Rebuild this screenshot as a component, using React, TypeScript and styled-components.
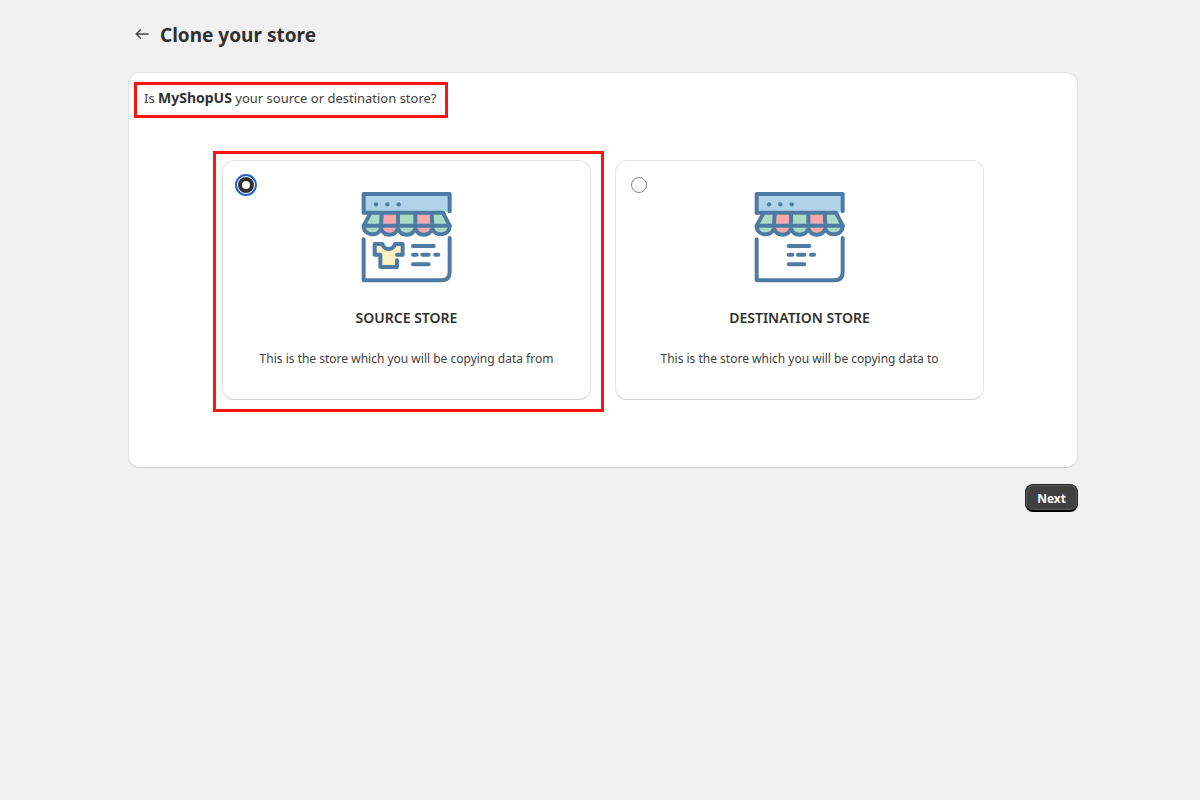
import React, { useState } from "react";
import styled, { createGlobalStyle } from "styled-components";

const GlobalStyle = createGlobalStyle`
  *, *::before, *::after { box-sizing: border-box; }
  body {
    margin: 0;
    background: #f1f1f1;
    color: #303030;
    font-family: "Segoe UI", "Noto Sans", "Open Sans", sans-serif;
    font-size: 13px;
    line-height: 20px;
  }
`;

const HIGHLIGHT = "#fb1410";

const Page = styled.div`
  padding: 21px 16px 20px 22px;
`;

const Content = styled.main`
  max-width: 950px;
  margin: 0 auto;
`;

const Header = styled.header`
  display: flex;
  align-items: flex-start;
  gap: 8px;
  padding-left: 4px;
  margin-bottom: 23px;
`;

const BackLink = styled.a`
  display: flex;
  width: 20px;
  height: 26px;
  align-items: center;
  color: #4a4a4a;
`;

const Title = styled.h1`
  margin: 0;
  font-size: 19px;
  line-height: 28px;
  font-weight: 700;
`;

const Panel = styled.section`
  padding: 9px 5px 67px;
  background: #fff;
  border: 1px solid #e3e3e3;
  border-bottom-color: #cfcfcf;
  border-radius: 12px;
`;

const Question = styled.p`
  width: fit-content;
  margin: 0;
  padding: 3px 8px 7px 7px;
  border: 3px solid ${HIGHLIGHT};
  color: #404040;

  b {
    color: #303030;
    font-size: 14px;
  }
`;

const Options = styled.div`
  display: grid;
  grid-template-columns: 1fr 1fr;
  gap: 24px;
  padding: 42px 88px 0;
`;

const OptionCard = styled.label<{ $highlighted?: boolean }>`
  position: relative;
  display: grid;
  grid-template-columns: 16px 1fr;
  padding: 16px 15px 30px;
  background: #fff;
  border: 1px solid #e3e3e3;
  border-bottom-color: #cfcfcf;
  border-radius: 12px;
  cursor: pointer;

  &::after {
    content: "";
    display: ${(p) => (p.$highlighted ? "block" : "none")};
    position: absolute;
    inset: -10px -14px -13px -10px;
    border: 3px solid ${HIGHLIGHT};
    pointer-events: none;
  }
`;

const Radio = styled.input`
  grid-area: 1 / 1;
  appearance: none;
  width: 16px;
  height: 16px;
  margin: 0;
  background: #fdfdfd;
  border: 1px solid #8a8a8a;
  border-radius: 50%;

  &:checked {
    background: #fff;
    border: 4px solid #303030;
    outline: 2px solid #1f5fd0;
    outline-offset: 1px;
  }
`;

const OptionBody = styled.div`
  grid-area: 1 / 1 / 2 / -1;
  display: flex;
  flex-direction: column;
  align-items: center;
  padding-top: 3px;
  text-align: center;
  pointer-events: none;
`;

const OptionTitle = styled.strong`
  margin-top: 16px;
  font-size: 14px;
  font-weight: 600;
`;

const OptionText = styled.span`
  margin-top: 21px;
  color: #404040;
  font-size: 12px;
`;

const Footer = styled.footer`
  display: flex;
  justify-content: flex-end;
  margin-top: 16px;
`;

const NextButton = styled.button`
  height: 28px;
  padding: 3px 11px 0;
  color: #fff;
  background: #404040;
  border: 1px solid #1f1f1f;
  border-bottom: 2px solid #000;
  border-radius: 8px;
  box-shadow: inset 0 0 0 1px #5c5c5c;
  font: inherit;
  font-size: 12px;
  font-weight: 700;
  cursor: pointer;
`;

const GREEN = "#aadcc5";
const PINK = "#f4a9ac";

function StoreIcon({ stocked }: { stocked: boolean }) {
  return (
    <svg width="112" height="112" viewBox="3 0 336 336" fill="none" stroke="#4e7ba3"
      strokeWidth="12" strokeLinecap="round" strokeLinejoin="round" aria-hidden="true">
      <path d="M41 98V42H299V96L284 98Z" fill="#afd4ea" stroke="none" />
      <g stroke="none">
        <path d="M61 98H97L93 137V138A26 25 0 0 1 41 138Z" fill={GREEN} />
        <path d="M97 98H144V138A25.500 25 0 0 1 93 138Z" fill={PINK} />
        <path d="M144 98H196V138A26 25 0 0 1 144 138Z" fill={GREEN} />
        <path d="M196 98H243L247 138A25.500 25 0 0 1 196 138Z" fill={PINK} />
        <path d="M243 98H279L299 138A26 25 0 0 1 247 138Z" fill={GREEN} />
      </g>
      <path d="M41 98V42H299V94" />
      <path d="M41 98H279L299 137H41L61 100M95 98L93 137M144 98V137M196 98V137M245 98L247 137" />
      <path d="M41 137C41 170 85 170 93 146C101 170 136 170 144 146C152 170 188 170 196 146C204 170 239 170 247 146C255 170 299 170 299 137" />
      <path d="M41 178V301H274Q299 301 299 276V174" />
      <g fill="#4e7ba3" stroke="none">
        <circle cx="78" cy="73" r="6.500" />
        <circle cx="112" cy="73" r="6.500" />
        <circle cx="146" cy="73" r="6.500" />
      </g>
      {stocked && (
        <path fill="#fff0bd" d="M141 241V261H91V224H74V192H97Q101 207 116 207Q131 207 135 192H158V224H141" />
      )}
      <path transform={stocked ? undefined : "translate(-52 0)"}
        d="M189 198H251M189 224H200M217 224H236M256 224H265M189 253H236" />
    </svg>
  );
}

const OPTIONS = [
  { id: "source", title: "SOURCE STORE", text: "This is the store which you will be copying data from" },
  { id: "destination", title: "DESTINATION STORE", text: "This is the store which you will be copying data to" },
];

export default function App() {
  const [selected, setSelected] = useState("source");

  return (
    <Page>
      <GlobalStyle />
      <Content>
        <Header>
          <BackLink href="#" aria-label="Back">
            <svg width="20" height="20" viewBox="0 0 20 20" fill="none" stroke="currentColor"
              strokeWidth="1.500" strokeLinecap="round" strokeLinejoin="round" aria-hidden="true">
              <path d="M16 10H4.500M8.500 5.800L4.200 10L8.500 14.200" />
            </svg>
          </BackLink>
          <Title>Clone your store</Title>
        </Header>
        <Panel>
          <Question id="question">
            Is <b>MyShopUS</b> your source or destination store?
          </Question>
          <Options role="radiogroup" aria-labelledby="question">
            {OPTIONS.map((o) => (
              <OptionCard key={o.id} htmlFor={o.id} $highlighted={o.id === "source"}>
                <Radio type="radio" name="role" id={o.id} value={o.id}
                  checked={selected === o.id} onChange={() => setSelected(o.id)} />
                <OptionBody>
                  <StoreIcon stocked={o.id === "source"} />
                  <OptionTitle>{o.title}</OptionTitle>
                  <OptionText>{o.text}</OptionText>
                </OptionBody>
              </OptionCard>
            ))}
          </Options>
        </Panel>
        <Footer>
          <NextButton type="button">Next</NextButton>
        </Footer>
      </Content>
    </Page>
  );
}
